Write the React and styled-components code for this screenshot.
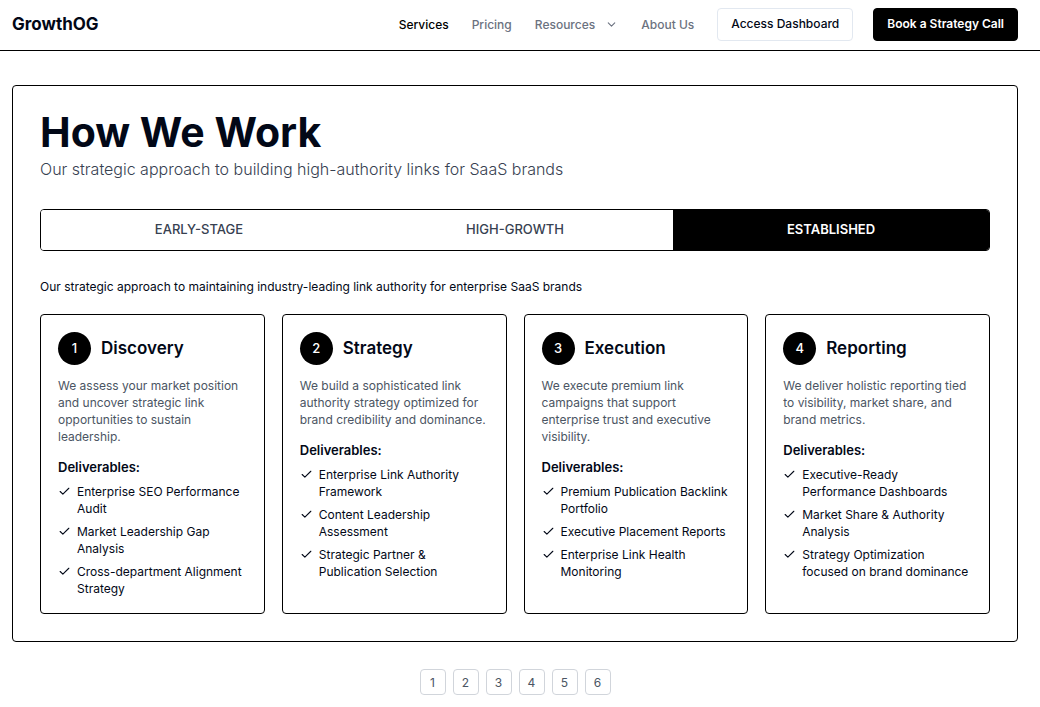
import React, { useState } from "react";
import styled, { createGlobalStyle } from "styled-components";
import { Check, ChevronDown } from "lucide-react";

const GlobalStyle = createGlobalStyle`
  *, *::before, *::after { box-sizing: border-box; }
  body {
    margin: 0;
    background: #fff;
    color: #020817;
    font-family: Inter, "Open Sans", sans-serif;
    font-size: 12px;
    line-height: 17px;
  }
  h1, h2, h3, p, ul { margin: 0; padding: 0; }
  button { font: inherit; cursor: pointer; }
`;

const Header = styled.header`
  display: flex;
  align-items: center;
  min-height: 51px;
  padding: 8px 22px 9px 12px;
  border-bottom: 1px solid #000;

  @media (max-width: 800px) {
    flex-wrap: wrap;
    gap: 12px;
  }
`;

const Logo = styled.a`
  margin-right: auto;
  padding-bottom: 2px;
  color: #020817;
  font-size: 17px;
  font-weight: 700;
  line-height: 24px;
  text-decoration: none;
`;

const Nav = styled.nav`
  display: flex;
  align-items: center;
  gap: 23px;
  margin-right: 23px;
`;

const NavLink = styled.a`
  display: inline-flex;
  align-items: center;
  gap: 10px;
  color: ${(p) => (p.$active ? "#000" : "#6b7280")};
  font-weight: 500;
  line-height: 17px;
  text-decoration: none;
`;

const Actions = styled.div`
  display: flex;
  gap: 20px;
`;

const ActionButton = styled.button`
  height: 33px;
  padding: 0 13px 2px;
  border: 1px solid ${(p) => (p.$primary ? "#000" : "#e2e8f0")};
  border-radius: 4px;
  background: ${(p) => (p.$primary ? "#000" : "#fff")};
  color: ${(p) => (p.$primary ? "#fff" : "#020817")};
  font-weight: ${(p) => (p.$primary ? 600 : 500)};
  white-space: nowrap;
`;

const Main = styled.main`
  padding: 34px 22px 12px 12px;
`;

const Panel = styled.section`
  padding: 27px;
  border: 1px solid #000;
  border-radius: 4px;
`;

const Title = styled.h1`
  font-size: 41px;
  font-weight: 700;
  line-height: 38px;
`;

const Subtitle = styled.p`
  margin-top: 6px;
  color: #374151;
  font-size: 16px;
  font-weight: 300;
  line-height: 24px;
`;

const Tabs = styled.div`
  display: grid;
  grid-template-columns: repeat(3, minmax(0, 1fr));
  margin-top: 28px;
  border: 1px solid #000;
  border-radius: 4px;
  overflow: hidden;
`;

const Tab = styled.button`
  height: 40px;
  padding: 0 0 2px;
  border: 0;
  background: ${(p) => (p.$active ? "#000" : "#fff")};
  color: ${(p) => (p.$active ? "#fff" : "#374151")};
  font-size: 13px;
  font-weight: ${(p) => (p.$active ? 600 : 500)};
`;

const Intro = styled.p`
  margin-top: 27px;
`;

const Cards = styled.div`
  display: grid;
  grid-template-columns: repeat(4, minmax(0, 1fr));
  gap: 17px;
  margin-top: 19px;

  @media (max-width: 900px) {
    grid-template-columns: repeat(auto-fit, minmax(220px, 1fr));
  }
`;

const Card = styled.article`
  padding: 17px 16px 16px 17px;
  border: 1px solid #000;
  border-radius: 4px;
`;

const CardHead = styled.div`
  display: flex;
  align-items: center;
  gap: 10px;
`;

const StepNumber = styled.span`
  display: grid;
  place-items: center;
  flex: none;
  width: 33px;
  height: 33px;
  border-radius: 50%;
  background: #000;
  color: #fff;
  font-size: 13px;
  font-weight: 500;
`;

const CardTitle = styled.h2`
  padding-bottom: 2px;
  font-size: 17px;
  font-weight: 600;
  line-height: 24px;
`;

const Description = styled.p`
  margin-top: 12px;
  color: #4b5563;
`;

const ListTitle = styled.h3`
  margin-top: 12px;
  font-size: 13px;
  font-weight: 600;
  line-height: 20px;
`;

const List = styled.ul`
  display: grid;
  gap: 6px;
  margin-top: 6px;
  list-style: none;
`;

const Item = styled.li`
  display: flex;
  gap: 6px;

  svg {
    flex: none;
    margin-top: 2px;
  }
`;

const Pagination = styled.nav`
  display: flex;
  justify-content: center;
  gap: 7px;
  margin-top: 27px;
`;

const PageButton = styled.button`
  width: 26px;
  height: 26px;
  padding: 0;
  border: 1px solid #d1d5db;
  border-radius: 4px;
  background: #fff;
  color: #4b5563;
`;

const tabs = ["EARLY-STAGE", "HIGH-GROWTH", "ESTABLISHED"];

const steps = [
  {
    title: "Discovery",
    text: "We assess your market position and uncover strategic link opportunities to sustain leadership.",
    items: [
      "Enterprise SEO Performance Audit",
      "Market Leadership Gap Analysis",
      "Cross-department Alignment Strategy",
    ],
  },
  {
    title: "Strategy",
    text: "We build a sophisticated link authority strategy optimized for brand credibility and dominance.",
    items: [
      "Enterprise Link Authority Framework",
      "Content Leadership Assessment",
      "Strategic Partner & Publication Selection",
    ],
  },
  {
    title: "Execution",
    text: "We execute premium link campaigns that support enterprise trust and executive visibility.",
    items: [
      "Premium Publication Backlink Portfolio",
      "Executive Placement Reports",
      "Enterprise Link Health Monitoring",
    ],
  },
  {
    title: "Reporting",
    text: "We deliver holistic reporting tied to visibility, market share, and brand metrics.",
    items: [
      "Executive-Ready Performance Dashboards",
      "Market Share & Authority Analysis",
      "Strategy Optimization focused on brand dominance",
    ],
  },
];

export default function App() {
  const [active, setActive] = useState(2);

  return (
    <>
      <GlobalStyle />
      <Header>
        <Logo href="#">GrowthOG</Logo>
        <Nav aria-label="Main">
          <NavLink href="#services" $active>Services</NavLink>
          <NavLink href="#pricing">Pricing</NavLink>
          <NavLink href="#resources">
            Resources
            <ChevronDown size={13} strokeWidth={2} aria-hidden="true" />
          </NavLink>
          <NavLink href="#about">About Us</NavLink>
        </Nav>
        <Actions>
          <ActionButton>Access Dashboard</ActionButton>
          <ActionButton $primary>Book a Strategy Call</ActionButton>
        </Actions>
      </Header>
      <Main>
        <Panel>
          <Title>How We Work</Title>
          <Subtitle>
            Our strategic approach to building high-authority links for SaaS brands
          </Subtitle>
          <Tabs role="tablist">
            {tabs.map((label, i) => (
              <Tab
                key={label}
                role="tab"
                aria-selected={i === active}
                $active={i === active}
                onClick={() => setActive(i)}
              >
                {label}
              </Tab>
            ))}
          </Tabs>
          <Intro>
            Our strategic approach to maintaining industry-leading link authority for enterprise SaaS brands
          </Intro>
          <Cards>
            {steps.map((step, i) => (
              <Card key={step.title}>
                <CardHead>
                  <StepNumber>{i + 1}</StepNumber>
                  <CardTitle>{step.title}</CardTitle>
                </CardHead>
                <Description>{step.text}</Description>
                <ListTitle>Deliverables:</ListTitle>
                <List>
                  {step.items.map((item) => (
                    <Item key={item}>
                      <Check size={13} strokeWidth={2} aria-hidden="true" />
                      <span>{item}</span>
                    </Item>
                  ))}
                </List>
              </Card>
            ))}
          </Cards>
        </Panel>
        <Pagination aria-label="Pages">
          {[1, 2, 3, 4, 5, 6].map((n) => (
            <PageButton key={n}>{n}</PageButton>
          ))}
        </Pagination>
      </Main>
    </>
  );
}
